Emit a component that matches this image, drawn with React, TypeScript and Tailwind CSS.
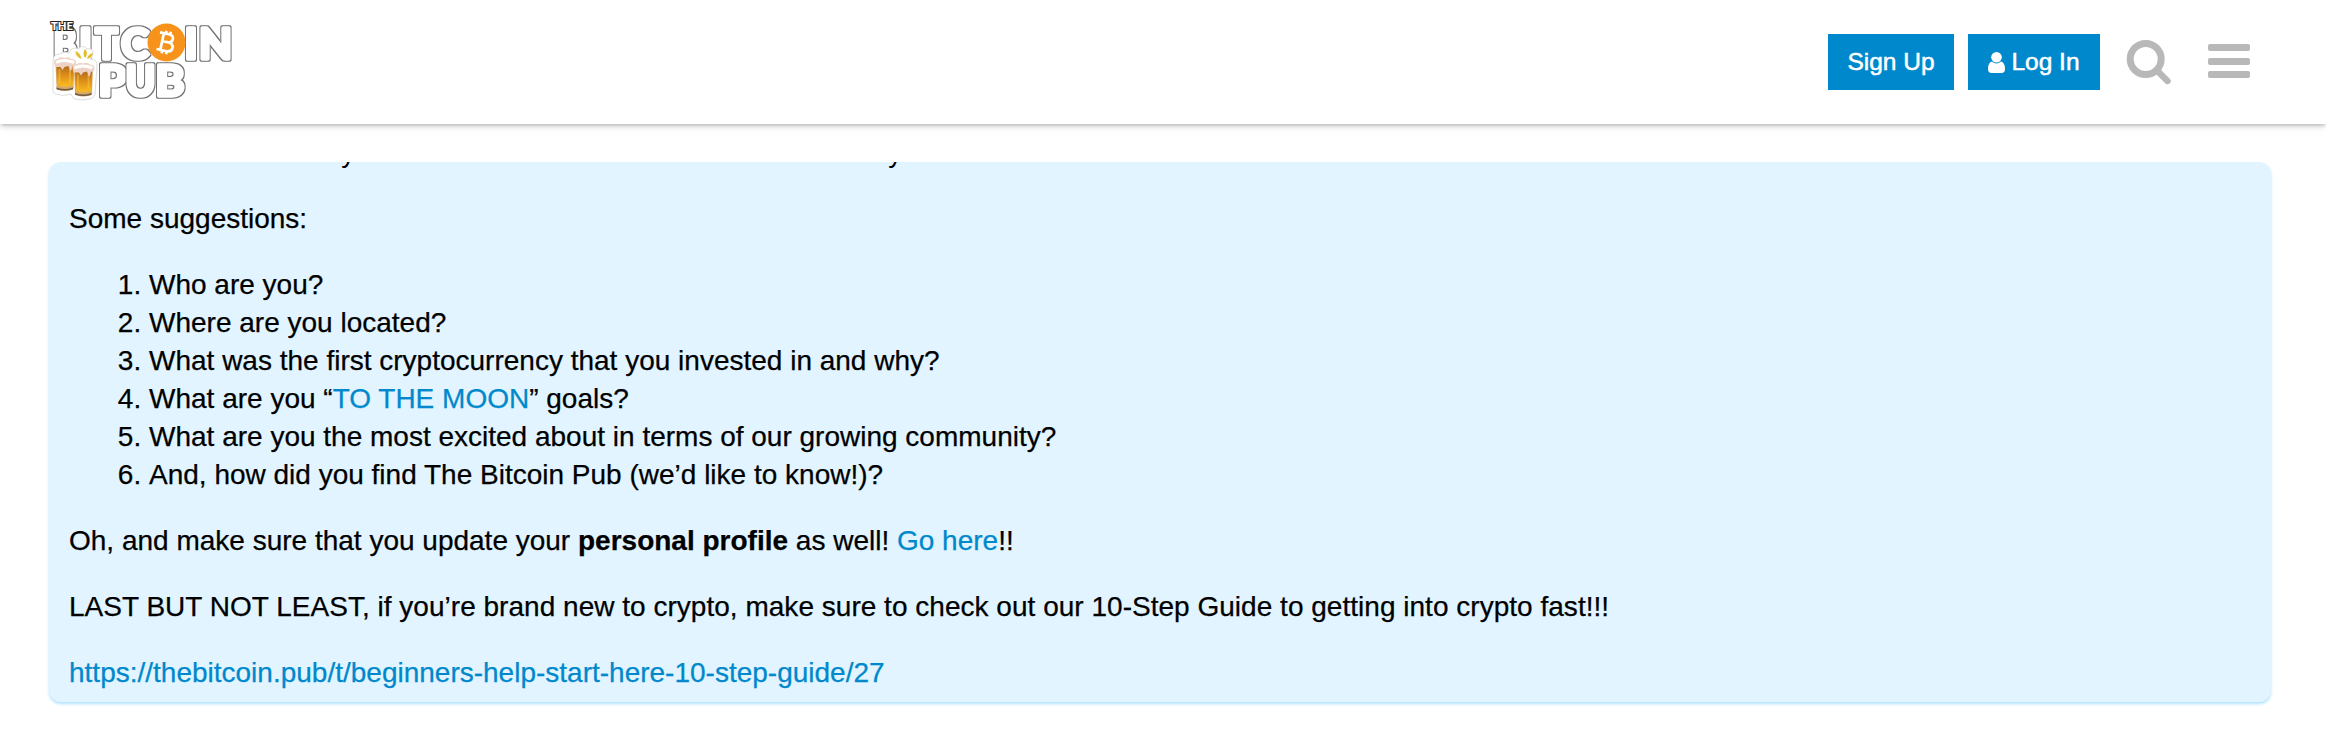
import React from 'react';

interface LogoLetter {
  char: string;
  x: number;
  y: number;
  width: number;
}

const letters: LogoLetter[] = [
  { char: 'B', x: 53.5, y: 59, width: 23 },
  { char: 'I', x: 79, y: 59, width: 13 },
  { char: 'T', x: 95, y: 59, width: 23 },
  { char: 'C', x: 121, y: 59, width: 28 },
  { char: 'I', x: 184.5, y: 59, width: 13 },
  { char: 'N', x: 199, y: 59, width: 33 },
  { char: 'P', x: 98.5, y: 96, width: 28 },
  { char: 'U', x: 125.5, y: 96, width: 30 },
  { char: 'B', x: 155.5, y: 96, width: 29 },
];

const Mug: React.FC<{ x: number; y: number }> = ({ x, y }) => (
  <g transform={`translate(${x} ${y})`}>
    <path d="M1 6h19l-1 22q1 3-2 4-7 2-13 0-3-1-2-4z" fill="#d9a865" />
    <path d="M2 6h17l-.500 21q-8 3-16 0z" fill="url(#beer)" />
    <path d="M5 11v14M15.500 11v14" stroke="#fbd04a" strokeWidth="1.800" opacity=".45" />
    <path d="M2 29.500q8.500 3 16.500 0v1.800q-8 2.500-16.500 0z" fill="#6b5a45" />
    <path d="M0 7Q-2 1 3 1 6-2 10 0q4-2 7 1 6 0 4 6-1 2-3 1l-1 4q-1 2-2-1l-1-3-4 1-2 3-2-3-5 0z" fill="#ecd3c6" />
    <path d="M1.500 4.500q8-4 18 0" stroke="#ffffff" strokeWidth="3" fill="none" />
  </g>
);

const Logo: React.FC = () => (
  <svg className="h-[88px] w-[188px] overflow-visible" viewBox="48 18 188 88" role="img" aria-label="The Bitcoin Pub">
    <defs>
      <linearGradient id="beer" x1="0" y1="0" x2="0" y2="1">
        <stop offset="0" stopColor="#a9641f" />
        <stop offset=".5" stopColor="#dd8d18" />
        <stop offset="1" stopColor="#f8bd22" />
      </linearGradient>
      {/* Thin grey line round the fat white letters */}
      <filter id="outline" x="-30%" y="-30%" width="160%" height="160%" colorInterpolationFilters="sRGB">
        <feMorphology in="SourceAlpha" operator="dilate" radius="1" result="grown" />
        <feFlood floodColor="#707070" />
        <feComposite in2="grown" operator="in" />
        <feMerge>
          <feMergeNode />
          <feMergeNode in="SourceGraphic" />
        </feMerge>
      </filter>
    </defs>

    {letters.map(({ char, x, y, width }, i) => (
      <text
        key={i}
        x={x}
        y={y}
        textLength={width}
        lengthAdjust="spacingAndGlyphs"
        filter="url(#outline)"
        className="fill-white stroke-white stroke-[3.5px] font-[Lato,sans-serif] text-[42px] font-black [stroke-linejoin:round]"
      >
        {char}
      </text>
    ))}
    <text
      x="51"
      y="30"
      textLength="22"
      lengthAdjust="spacingAndGlyphs"
      className="fill-white stroke-[#222] stroke-[2.2px] font-[Lato,sans-serif] text-[12px] font-black [paint-order:stroke]"
    >
      THE
    </text>

    {/* Coin */}
    <circle cx="166.500" cy="42.500" r="19" fill="#f7931a" />
    <g transform="rotate(12 166.500 42.500)">
      <path
        d="M162 34v17M158 34h9q5 0 5 4t-5 4h-5.500 6q6 0 6 4.500t-6 4.500H158M164 31v3M168.500 31v3M164 51v3M168.500 51v3"
        fill="none"
        stroke="#ffffff"
        strokeWidth="2.700"
      />
    </g>

    {/* Beer mugs */}
    <path
      d="M53 61q0-7 7-7 4-3 9-1 3-7 9-4 5-5 9 0 7-1 6 5-1 4-3 5 8 0 7 8l-2 26q0 5-6 6-8 2-14 0-3-1-4-5-8 3-15 0-4-1-3-6z"
      fill="#ffffff"
      stroke="#dddddd"
    />
    <Mug x={54.500} y={58} />
    <Mug x={73} y={63.500} />
    <path
      d="M75.500 51q5 2 6 8-6-2-6-8zM85 49q4 4 0 9-3-5 0-9zM93 53q-1 5-6 6 1-5 6-6z"
      fill="#e3bd2a"
    />
  </svg>
);

const Header: React.FC = () => (
  <header className="flex h-[124px] items-center justify-between pl-12 pr-[76px] shadow-[0_2px_4px_-1px_rgba(0,0,0,0.25),0_2px_8px_0_rgba(0,0,0,0.12)]">
    <Logo />
    <div className="flex items-center text-[24.5px] leading-none text-white [-webkit-text-stroke:0.5px_white]">
      <button className="h-14 w-[126px] bg-[#0088cc]">Sign Up</button>
      <button className="ml-3.5 flex h-14 w-[132px] items-center justify-center gap-[6px] bg-[#0088cc]">
        <svg className="h-[21px] w-[17px]" viewBox="0 0 17 21" fill="currentColor">
          <path d="M4 9.500Q0 10.500 0 17q0 4 3.500 4h10q3.500 0 3.500-4 0-6.500-4-7.500-2 2-4.500 2T4 9.500z" />
          <circle cx="8.500" cy="5.300" r="5.300" />
        </svg>
        Log In
      </button>
      <svg className="ml-[26px] h-[46px] w-[46px]" viewBox="0 0 46 46" fill="none" stroke="#b8b8b8">
        <circle cx="19.700" cy="20" r="15.500" strokeWidth="7" />
        <path d="M31 31.500L41.500 42" strokeWidth="6.500" strokeLinecap="round" />
      </svg>
      <div className="-mt-0.5 ml-9 flex w-[42px] flex-col gap-[6.5px]">
        <span className="h-[7px] rounded-[2px] bg-[#b8b8b8]" />
        <span className="h-[7px] rounded-[2px] bg-[#b8b8b8]" />
        <span className="h-[7px] rounded-[2px] bg-[#b8b8b8]" />
      </div>
    </div>
  </header>
);

const Link: React.FC<{ children: React.ReactNode }> = ({ children }) => (
  <a href="#" className="text-[#0088cc]">
    {children}
  </a>
);

export default function App() {
  return (
    <div className="h-[750px] overflow-hidden bg-white font-['Liberation_Sans',Arial,sans-serif] text-black">
      <Header />

      {/* Welcome notice, scrolled to its end */}
      <main className="ml-[49px] mr-[55px] mt-[38px] flex h-[540px] flex-col justify-end gap-7 overflow-hidden rounded-xl bg-[#e1f4ff] px-5 pb-2.5 text-[28px] leading-[38px] shadow-[0_2px_3px_#b0e3ff] [-webkit-text-stroke:0.25px_currentColor]">
        <p className="[-webkit-text-stroke:0]">
          Feel free to introduce yourself to the <span className="tracking-[0.5px]">FUN-FILLED PUB</span> community
        </p>
        <p>Some suggestions:</p>
        <ol className="list-decimal pl-20">
          <li>Who are you?</li>
          <li>Where are you located?</li>
          <li>What was the first cryptocurrency that you invested in and why?</li>
          <li>
            What are you “<Link>TO THE MOON</Link>” goals?
          </li>
          <li>What are you the most excited about in terms of our growing community?</li>
          <li>And, how did you find The Bitcoin Pub (we’d like to know!)?</li>
        </ol>
        <p>
          Oh, and make sure that you update your <strong>personal profile</strong> as well! <Link>Go here</Link>!!
        </p>
        <p className="tracking-[0.02px]">
          LAST BUT NOT LEAST, if you’re brand new to crypto, make sure to check out our 10-Step Guide to getting into
          crypto fast!!!
        </p>
        <p>
          <Link>https://thebitcoin.pub/t/beginners-help-start-here-10-step-guide/27</Link>
        </p>
      </main>
    </div>
  );
}
